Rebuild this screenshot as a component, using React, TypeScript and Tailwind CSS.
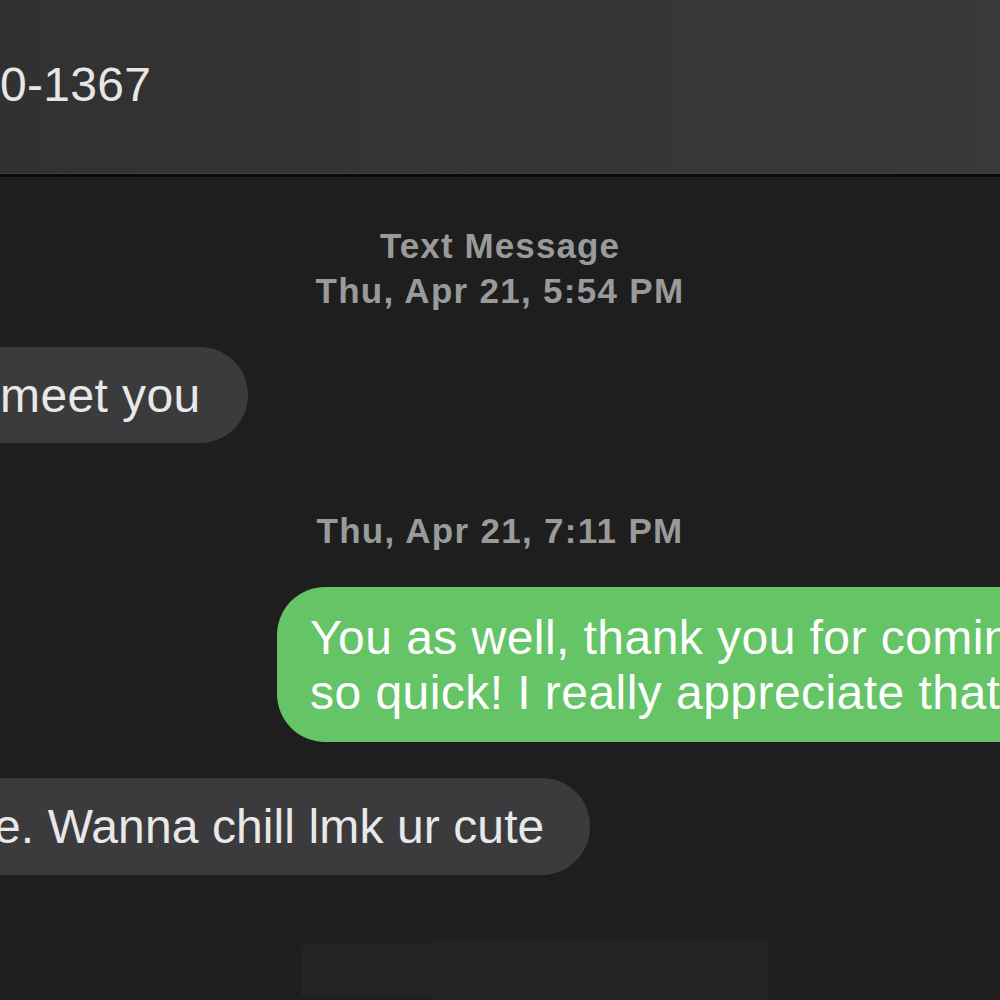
const font = { fontFamily: '"Liberation Sans", Arial, sans-serif' };

function Stamp({ lines }: { lines: { text: string; size: string }[] }) {
  return (
    <div className="flex flex-col items-center font-bold text-[#9a9a9a]">
      {lines.map((l) => (
        <div key={l.text} className={l.size}>
          {l.text}
        </div>
      ))}
    </div>
  );
}

export default function App() {
  return (
    <div
      className="flex h-[1000px] w-[1000px] flex-col overflow-hidden bg-[#1e1e1e]"
      style={font}
    >
      <header className="h-[177px] shrink-0 border-b-[3px] border-[#0a0a0a] bg-gradient-to-r from-[#313131] to-[#393939]">
        <div className="h-[174px] border-b border-[#404040]">
          <div className="whitespace-nowrap pt-[57px] text-[48px] leading-[55px] tracking-[0.3px] text-[#e6e6e6]">
            0-1367
          </div>
        </div>
      </header>

      <main className="flex flex-col">
        <div className="mt-[46px]">
          <Stamp
            lines={[
              {
                text: "Text Message",
                size: "text-[35px] leading-[45px] tracking-[1.1px]",
              },
              {
                text: "Thu, Apr 21, 5:54 PM",
                size: "text-[35px] leading-[45px] tracking-[1.3px]",
              },
            ]}
          />
        </div>

        <div className="mt-[34px] flex">
          <div className="whitespace-nowrap rounded-r-[48px] bg-[#3b3b3d] py-[20.5px] pr-[47px] text-[48px] leading-[55px] tracking-[0.4px] text-[#e8e8e8]">
            meet you
          </div>
        </div>

        <div className="mt-[65px]">
          <Stamp
            lines={[
              {
                text: "Thu, Apr 21, 7:11 PM",
                size: "text-[35px] leading-[45px] tracking-[1.3px]",
              },
            ]}
          />
        </div>

        <div className="mt-[34px] flex pl-[277px]">
          <div className="w-[900px] shrink-0 whitespace-nowrap rounded-l-[48px] bg-[#65c466] py-[22.5px] pl-[33px] text-[48px] leading-[55px] tracking-[0.45px] text-white">
            You as well, thank you for coming
            <br />
            so quick! I really appreciate that
          </div>
        </div>

        <div className="mt-[36px] flex">
          <div className="-ml-[6px] whitespace-nowrap rounded-r-[48px] bg-[#3b3b3d] py-[21px] pr-[46px] text-[48px] leading-[55px] tracking-[0.1px] text-[#e8e8e8]">
            e. Wanna chill lmk ur cute
          </div>
        </div>

        <div className="mt-[66px] flex items-start pl-[301px]">
          <div className="mt-[4px] h-[51px] w-[131px] bg-[#232323]" />
          <div className="h-[60px] w-[336px] bg-[#232323]" />
        </div>
      </main>
    </div>
  );
}
